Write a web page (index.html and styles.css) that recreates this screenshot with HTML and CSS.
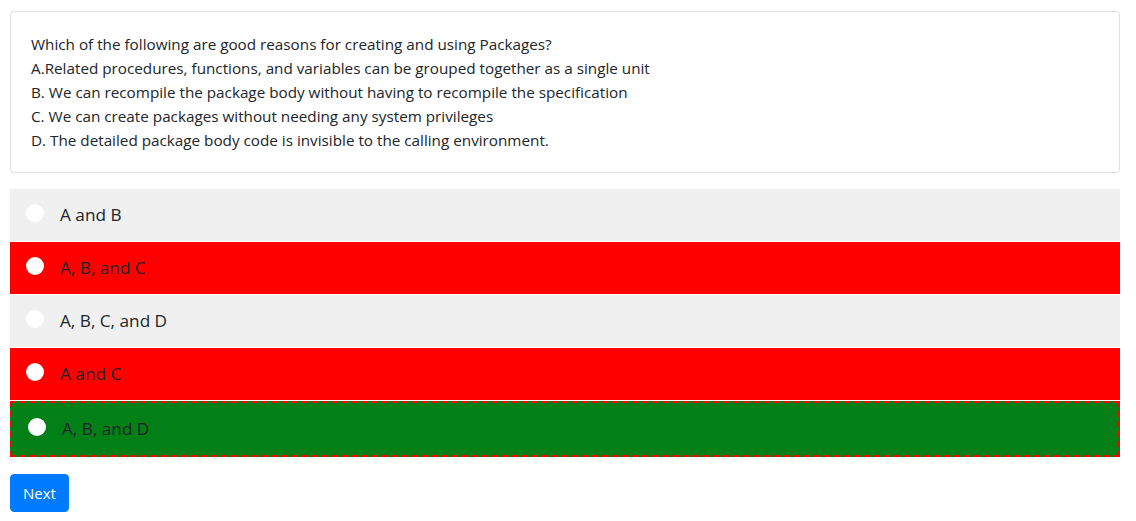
FILE: index.html
```html
<!DOCTYPE html>
<html lang="en">
<head>
<meta charset="utf-8">
<title>Quiz</title>
<link rel="stylesheet" href="styles.css">
</head>
<body>
<main class="page">
  <section class="card">
    <p class="q-line">Which of the following are good reasons for creating and using Packages?</p>
    <p class="q-line">A.Related procedures, functions, and variables can be grouped together as a single unit</p>
    <p class="q-line">B. We can recompile the package body without having to recompile the specification</p>
    <p class="q-line">C. We can create packages without needing any system privileges</p>
    <p class="q-line">D. The detailed package body code is invisible to the calling environment.</p>
  </section>
  <div class="options">
    <label class="option neutral"><span class="dot"></span><span class="opt-text">A and B</span></label>
    <label class="option wrong"><span class="dot"></span><span class="opt-text">A, B, and C</span></label>
    <label class="option neutral"><span class="dot"></span><span class="opt-text">A, B, C, and D</span></label>
    <label class="option wrong"><span class="dot"></span><span class="opt-text">A and C</span></label>
    <label class="option right"><span class="dot"></span><span class="opt-text">A, B, and D</span></label>
  </div>
  <button class="btn-next" type="button">Next</button>
</main>
</body>
</html>
```

FILE: styles.css
```css
* { box-sizing: border-box; }
html, body { margin: 0; padding: 0; background: #fff; }
body {
  font-family: "Open Sans", "Noto Sans", "Liberation Sans", sans-serif;
  color: #212529;
}
.page {
  padding: 11px 16px 0 10px;
  display: flex;
  flex-direction: column;
  align-items: flex-start;
}
.card {
  width: 100%;
  border: 1px solid #dfdfdf;
  border-radius: 4px;
  padding: 20px;
}
.q-line {
  margin: 0;
  font-size: 15.25px;
  line-height: 24px;
  color: #212529;
}
.options {
  width: 100%;
  margin-top: 16px;
  display: flex;
  flex-direction: column;
  gap: 1px;
}
.option {
  height: 52px;
  display: flex;
  align-items: center;
  padding: 0 16px;
  gap: 16px;
  font-size: 17.2px;
  color: #212529;
}
.option.neutral { background: #f0f0f0; }
.option.wrong { background: #ff0000; }
.option.right {
  background: #027f17;
  border: 2px dashed #ff0000;
  height: 56px;
}
.dot {
  width: 18px;
  height: 18px;
  border-radius: 50%;
  background: #fff;
  margin-bottom: 4px;
  flex: none;
}
.opt-text { line-height: 24px; }
.btn-next {
  margin-top: 17px;
  height: 38px;
  padding: 0 12px;
  border: 1px solid #007bff;
  border-radius: 4px;
  background: #007bff;
  color: #fff;
  font-family: "Open Sans", "Noto Sans", "Liberation Sans", sans-serif;
  font-size: 15px;
  line-height: 24px;
}
```
